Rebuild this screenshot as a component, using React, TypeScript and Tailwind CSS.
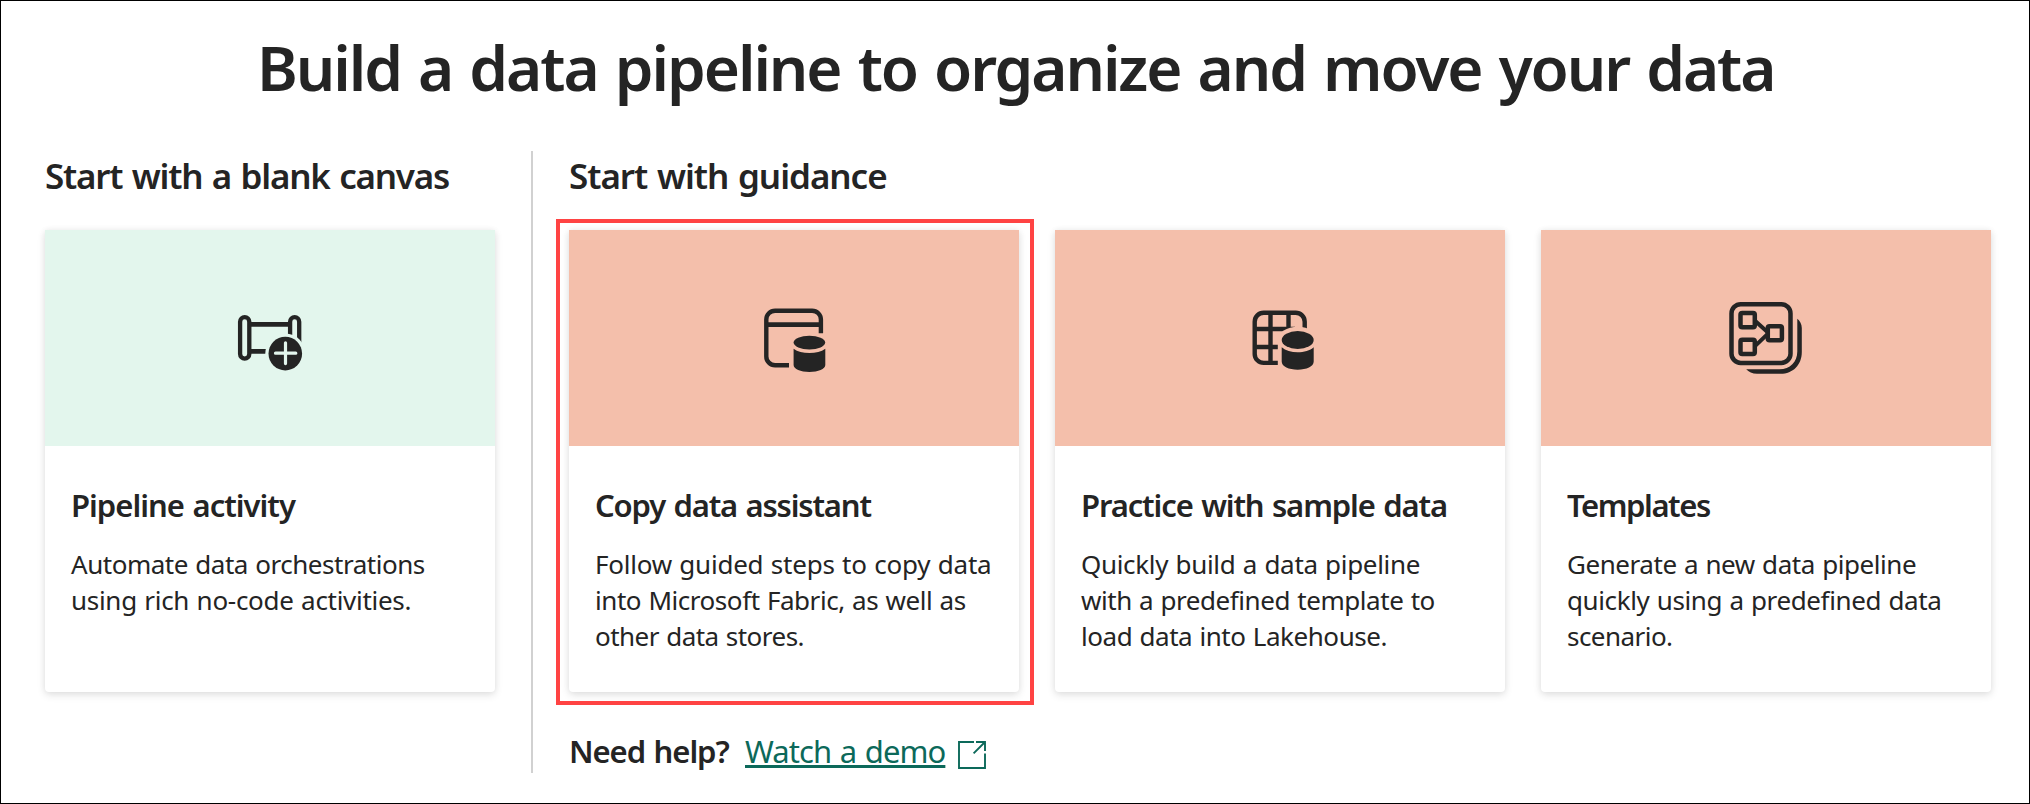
import React from 'react';

type Line = { text: string; tracking: string };

const MINT = '#e3f6ed';
const PEACH = '#f4bfab';
const INK = '#242424';

function PipelineIcon() {
  return (
    <svg width="100" height="80" viewBox="0 -2 100 80" fill="none" stroke={INK} strokeWidth="4.3">
      <rect x="20.1" y="17.1" width="9.2" height="41.5" rx="4.6" />
      <path d="M70.1 40V21.7a4.55 4.55 0 0 1 9.1 0V44" />
      <path d="M30 24.4H70M30 51.4H48" strokeWidth="4.8" />
      <circle cx="65.3" cy="53.6" r="20" fill={MINT} stroke="none" />
      <circle cx="65.3" cy="53.6" r="16.8" fill={INK} stroke="none" />
      <path d="M55.5 53.2H75.8M65.5 42.8V63.6" stroke={MINT} strokeWidth="3.2" strokeLinecap="round" />
    </svg>
  );
}

function CopyIcon() {
  return (
    <svg width="100" height="90" viewBox="-1 -2 100 90" fill="none" stroke={INK} strokeWidth="4.4">
      <path d="M75.9 38.2V24.5a8.8 8.8 0 0 0-8.8-8.8H30.1a8.8 8.8 0 0 0-8.8 8.8V61.4a8.8 8.8 0 0 0 8.8 8.8H44" />
      <path d="M21 29.6H76" strokeWidth="4.8" />
      <ellipse cx="64.4" cy="47.6" rx="15.8" ry="6.8" fill={INK} stroke="none" />
      <path
        d="M48.6 53.7C52.5 56.8 58 58 64.4 58S76.3 56.8 80.3 53.7V70C80.3 74 73.2 77 64.4 77S48.6 74 48.6 70Z"
        fill={INK}
        stroke="none"
      />
    </svg>
  );
}

function SampleIcon() {
  return (
    <svg width="100" height="90" viewBox="-5 -2 100 90" fill="none" stroke={INK} strokeWidth="4.4">
      <rect x="19.7" y="17.7" width="50" height="50.2" rx="9" />
      <path d="M35.5 18V68M53.5 18V40M20 34H60M20 52H48" />
      <path d="M42.8 45A20 13.3 0 0 1 82.8 45V80H42.8Z" fill={PEACH} stroke="none" />
      <ellipse cx="62.7" cy="45" rx="16" ry="8.9" fill={INK} stroke="none" />
      <path
        d="M46.7 52.2C50.5 55.6 56.3 57.2 62.7 57.2S75 55.6 78.7 52.2V66.5C78.7 71.5 71.5 74.7 62.7 74.7S46.7 71.5 46.7 66.5Z"
        fill={INK}
        stroke="none"
      />
    </svg>
  );
}

function TemplatesIcon() {
  return (
    <svg width="100" height="96" viewBox="1 0 100 96" fill="none" stroke={INK} strokeWidth="4.5">
      <rect x="16.5" y="14.2" width="59" height="58.7" rx="9.2" />
      <rect x="25.5" y="22.9" width="14.3" height="14.3" rx="1.8" />
      <rect x="52.8" y="36.2" width="14.1" height="14.1" rx="1.8" />
      <rect x="25.5" y="49.8" width="14.3" height="14.3" rx="1.8" />
      <path d="M40.5 31.2L53 42.6M40.5 55.6L53 43.6" strokeWidth="4" />
      <path
        d="M82.3 28.8C85 31 86.8 34 86.8 38V62C86.8 75 78 83.8 65.5 83.8H42C37.5 83.8 33.5 82 31.2 79.3H64.5C75 79.3 82.3 72 82.3 61.5Z"
        fill={INK}
        stroke="none"
      />
    </svg>
  );
}

function OpenIcon() {
  return (
    <svg className="ml-[11px] mt-3" width="28" height="28" viewBox="0 0 28 28" fill="none" stroke="#0c695a" strokeWidth="1.9">
      <path d="M16 1H1V27H27V12.4M18 1H27V10M27 1L15.6 12.4" />
    </svg>
  );
}

function Card(props: {
  icon: React.ReactNode;
  band: string;
  title: string;
  titleClass: string;
  lines: Line[];
  highlighted?: boolean;
}) {
  return (
    <div className="relative h-[462px] w-[450px] rounded-b-[4px] bg-white shadow-[0_3px_8px_rgba(0,0,0,0.11),0_0_6px_rgba(0,0,0,0.06)]">
      <div className={`flex h-[216px] items-center justify-center ${props.band}`}>{props.icon}</div>
      <div className="px-[26px] pt-[39px]">
        <h3 className={`text-[31px] leading-10 font-semibold whitespace-nowrap [word-spacing:1.5px] ${props.titleClass}`}>
          {props.title}
        </h3>
        <p className="mt-[21px] text-[26px] leading-9 whitespace-nowrap [word-spacing:1px]">
          {props.lines.map((line) => (
            <span key={line.text} className={`block ${line.tracking}`}>
              {line.text}
            </span>
          ))}
        </p>
      </div>
      {props.highlighted && (
        <div className="absolute -top-[11px] -right-[15px] -bottom-[13px] -left-[13px] border-4 border-[#ff4343]" />
      )}
    </div>
  );
}

export default function App() {
  return (
    <div className="h-[804px] w-[2030px] overflow-hidden border border-black bg-white font-['Noto_Sans','Open_Sans',sans-serif] text-[#242424]">
      <h1 className="pt-[26px] pl-[256px] text-[62px] leading-[80px] font-semibold tracking-[-2.06px] whitespace-nowrap [word-spacing:3px]">
        Build a data pipeline to organize and move your data
      </h1>
      <main className="mt-11 flex pl-11">
        <section className="w-[450px] pt-[3px]">
          <h2 className="text-[35px] leading-[44px] font-semibold tracking-[-1.24px] whitespace-nowrap [word-spacing:1.7px]">
            Start with a blank canvas
          </h2>
          <div className="mt-8">
            <Card
              icon={<PipelineIcon />}
              band="bg-[#e3f6ed]"
              title="Pipeline activity"
              titleClass="tracking-[-0.99px]"
              lines={[
                { text: 'Automate data orchestrations', tracking: 'tracking-[-0.47px]' },
                { text: 'using rich no-code activities.', tracking: 'tracking-[-0.29px]' },
              ]}
            />
          </div>
        </section>
        <div className="ml-9 h-[622px] w-0.5 bg-[#d1d1d1]" />
        <section className="ml-9 pt-[3px]">
          <h2 className="text-[35px] leading-[44px] font-semibold tracking-[-1.04px] whitespace-nowrap [word-spacing:1.7px]">
            Start with guidance
          </h2>
          <div className="mt-8 flex gap-9">
            <Card
              highlighted
              icon={<CopyIcon />}
              band="bg-[#f4bfab]"
              title="Copy data assistant"
              titleClass="tracking-[-1.16px]"
              lines={[
                { text: 'Follow guided steps to copy data', tracking: 'tracking-[-0.24px]' },
                { text: 'into Microsoft Fabric, as well as', tracking: 'tracking-[-0.45px]' },
                { text: 'other data stores.', tracking: 'tracking-[-0.53px]' },
              ]}
            />
            <Card
              icon={<SampleIcon />}
              band="bg-[#f4bfab]"
              title="Practice with sample data"
              titleClass="tracking-[-1.12px]"
              lines={[
                { text: 'Quickly build a data pipeline', tracking: 'tracking-[-0.33px]' },
                { text: 'with a predefined template to', tracking: 'tracking-[-0.45px]' },
                { text: 'load data into Lakehouse.', tracking: 'tracking-[-0.46px]' },
              ]}
            />
            <Card
              icon={<TemplatesIcon />}
              band="bg-[#f4bfab]"
              title="Templates"
              titleClass="tracking-[-1.43px]"
              lines={[
                { text: 'Generate a new data pipeline', tracking: 'tracking-[-0.44px]' },
                { text: 'quickly using a predefined data', tracking: 'tracking-[-0.39px]' },
                { text: 'scenario.', tracking: 'tracking-[-0.54px]' },
              ]}
            />
          </div>
          <div className="mt-[37px] flex h-11 text-[31px] leading-[44px] whitespace-nowrap [word-spacing:1.5px]">
            <span className="w-[176px] font-semibold tracking-[-1.05px]">Need help?</span>
            <a className="w-[202px] tracking-[-0.94px] text-[#0c695a] underline decoration-[3px] underline-offset-[2px] [text-decoration-skip-ink:none]">
              Watch a demo
            </a>
            <OpenIcon />
          </div>
        </section>
      </main>
    </div>
  );
}
